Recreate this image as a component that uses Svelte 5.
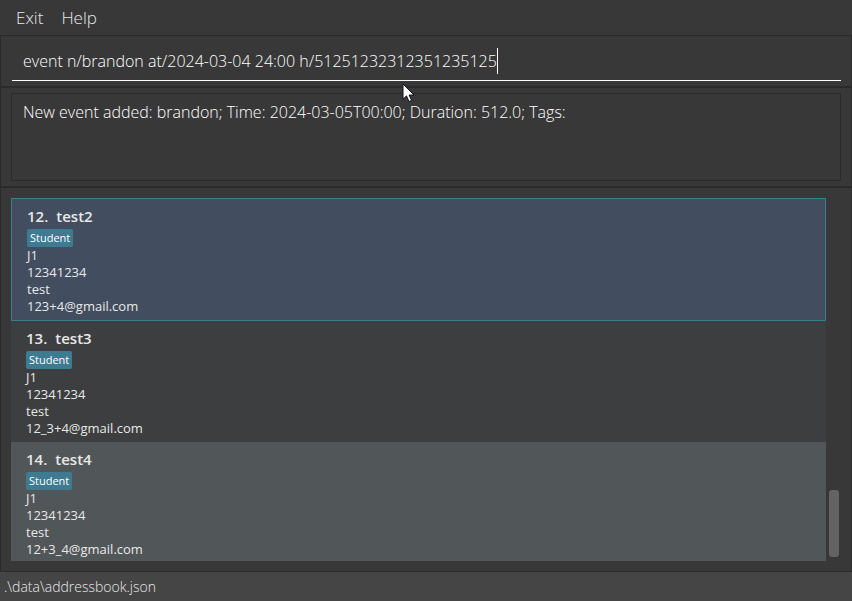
<script>
  let command = $state('event n/brandon at/2024-03-04 24:00 h/51251232312351235125');
  let result = $state('New event added: brandon; Time: 2024-03-05T00:00; Duration: 512.0; Tags:');
  let selected = $state(12);
  const people = [
    { id: 12, name: 'test2', tag: 'Student', group: 'J1', phone: '12341234', address: 'test', email: '123+4@gmail.com' },
    { id: 13, name: 'test3', tag: 'Student', group: 'J1', phone: '12341234', address: 'test', email: '12_3+4@gmail.com' },
    { id: 14, name: 'test4', tag: 'Student', group: 'J1', phone: '12341234', address: 'test', email: '12+3_4@gmail.com' }
  ];
</script>

<div class="window">
  <nav class="menu">
    <button type="button">Exit</button>
    <button type="button">Help</button>
  </nav>

  <section class="pane command">
    <input type="text" aria-label="Command" spellcheck="false" bind:value={command} />
    <span class="caret"></span>
  </section>

  <section class="pane result">
    <textarea aria-label="Result" readonly spellcheck="false" value={result}></textarea>
  </section>

  <main class="pane people">
    <ul class="list">
      {#each people as p (p.id)}
        <li class="card" class:selected={selected === p.id}>
          <h2><span>{p.id}.</span><span>{p.name}</span></h2>
          <span class="tag">{p.tag}</span>
          <p>{p.group}</p>
          <p>{p.phone}</p>
          <p>{p.address}</p>
          <p>{p.email}</p>
        </li>
      {/each}
    </ul>
    <div class="track"><div class="thumb"></div></div>
  </main>

  <footer class="status">.\data\addressbook.json</footer>

  <svg class="pointer" width="13" height="20" viewBox="0 0 13 20" aria-hidden="true">
    <path d="M1 1V16.2L4.5 12.9L7 18.5L9.6 17.4L7.1 12H12Z" fill="#fff" stroke="#10101c" stroke-width="1" />
  </svg>
</div>

<style>
  :global(body) {
    margin: 0;
    background: #383838;
  }
  .window {
    position: relative;
    display: flex;
    flex-direction: column;
    height: 100vh;
    overflow: hidden;
    box-sizing: border-box;
    background: #383838;
    color: #e8e8e8;
    font-family: 'Open Sans', 'Noto Sans', sans-serif;
    font-size: 13px;
  }
  .window * {
    box-sizing: border-box;
  }
  .menu {
    display: flex;
    flex: none;
    gap: 18px;
    height: 35px;
    padding: 0 16px;
  }
  .menu button {
    padding: 0;
    border: 0;
    background: none;
    color: #e8e8e8;
    font: 300 17px/35px 'Open Sans', 'Noto Sans', sans-serif;
  }
  .pane {
    flex: none;
    border: 1px solid #2b2b2b;
  }
  .command {
    position: relative;
    padding: 5px 10px 5px 11px;
  }
  input {
    display: block;
    width: 100%;
    height: 40px;
    padding: 0 11px;
    border: 0;
    border-bottom: 1px solid #fff;
    outline: none;
    background: none;
    color: #fff;
    font: 300 16px/24px 'Open Sans', 'Noto Sans', sans-serif;
  }
  .caret {
    position: absolute;
    top: 12px;
    left: 496px;
    width: 1px;
    height: 26px;
    background: #fff;
  }
  .result {
    padding: 5px 10px;
  }
  textarea {
    display: block;
    width: 100%;
    height: 88px;
    padding: 6px 11px;
    border: 1px solid #2b2b2b;
    outline: none;
    resize: none;
    background: none;
    color: #fff;
    font: 300 16px/24px 'Open Sans', 'Noto Sans', sans-serif;
  }
  .people {
    display: flex;
    flex: 1;
    gap: 3px;
    min-height: 0;
    padding: 10px 12px 10px 10px;
  }
  .list {
    flex: 1;
    margin: 0;
    padding: 0;
    overflow: hidden;
    list-style: none;
  }
  .card {
    padding: 5px 15px;
    background: #515658;
  }
  .card:nth-child(even) {
    background: #3c3e3f;
  }
  .card.selected {
    border: 1px solid #3e7b91;
    background: #424d5f;
  }
  h2 {
    display: flex;
    gap: 8px;
    margin: 0;
    font-size: 15px;
    font-weight: 600;
    line-height: 25px;
  }
  .tag {
    display: block;
    width: fit-content;
    padding: 0 3px;
    border-radius: 2px;
    background: #3e7b91;
    color: #fff;
    font-size: 11px;
    line-height: 18px;
  }
  p {
    margin: 0;
    line-height: 17px;
  }
  .track {
    display: flex;
    align-items: flex-end;
    width: 10px;
    padding-bottom: 4px;
  }
  .thumb {
    width: 100%;
    height: 67px;
    border-radius: 3px;
    background: #636363;
  }
  .status {
    flex: none;
    padding: 0 4px;
    background: #454545;
    color: #e8e8e8;
    font-size: 14px;
    font-weight: 300;
    line-height: 29px;
  }
  .pointer {
    position: absolute;
    top: 83px;
    left: 402px;
  }
</style>
